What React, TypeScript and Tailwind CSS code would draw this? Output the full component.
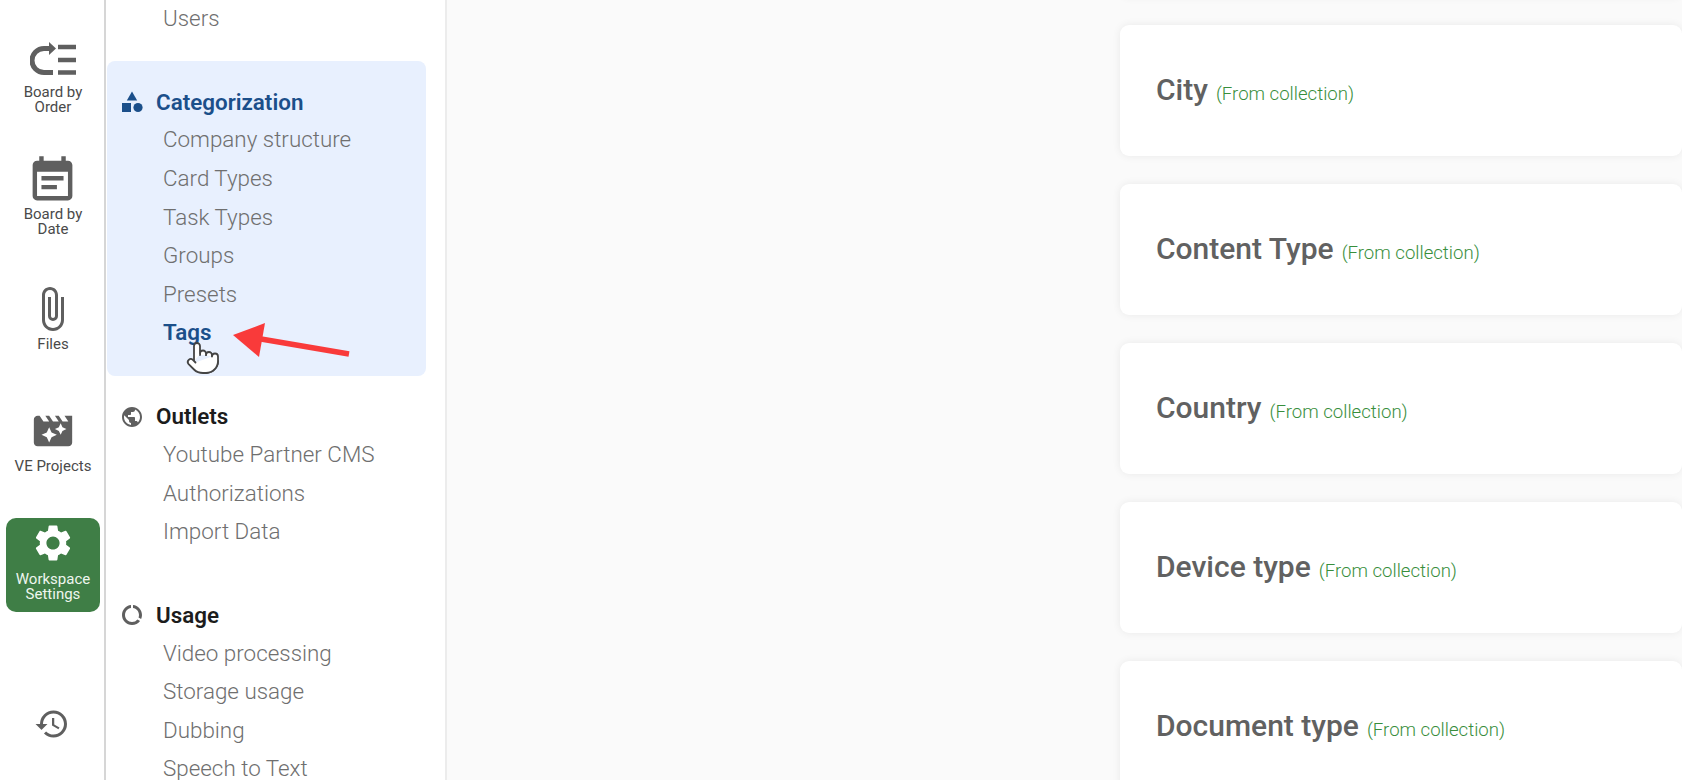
import type { ReactNode } from 'react';
import { MdAttachFile, MdDataUsage, MdEventNote, MdMovieFilter, MdPublic, MdRestore, MdSettings } from 'react-icons/md';
import { Pointer } from 'lucide-react';

function OrderIcon() {
  return (
    <svg width="46" height="36" viewBox="0 0 46 36" fill="none" className="text-[#5f5f5f]">
      <path d="M23 31.5H14A12 12 0 0 1 14 7.5H20" stroke="currentColor" strokeWidth="5" />
      <path d="M19 1L26 7.5L19 14Z" fill="currentColor" />
      <path d="M28 6H46M28 19H46M28 31.5H46" stroke="currentColor" strokeWidth="4.5" />
    </svg>
  );
}

function CategoryIcon() {
  return (
    <svg width="22" height="22" viewBox="0 0 22 22" className="shrink-0 text-[#1b4f8a]" fill="currentColor">
      <path d="M11 0.5L16.2 9.5H5.8Z" />
      <rect x="1" y="12" width="9" height="9" />
      <circle cx="17" cy="16.5" r="4.6" />
    </svg>
  );
}

function RailItem({ icon, label, active }: { icon: ReactNode; label: ReactNode; active?: boolean }) {
  return (
    <div
      className={
        active
          ? 'flex h-[94px] w-[94px] shrink-0 flex-col items-center justify-center rounded-[10px] bg-[#3f7e46] pb-[8px] text-[#eef6ee]'
          : 'flex h-[94px] w-[94px] shrink-0 flex-col items-center justify-center text-[#4a4a4a]'
      }
    >
      <div className="flex h-[44px] items-center justify-center">{icon}</div>
      <div className={active ? 'mt-[7px] text-center text-[15px] leading-[14.7px]' : 'mb-[2.5px] mt-[4.5px] text-center text-[15px] leading-[14.7px]'}>
        {label}
      </div>
    </div>
  );
}

function Rail() {
  return (
    <div className="flex h-full w-[106px] shrink-0 flex-col gap-[28px] border-r-2 border-[#d6d6d6] bg-white pl-[6px] pt-[30px]">
      <RailItem icon={<OrderIcon />} label={<>Board by<br />Order</>} />
      <RailItem icon={<MdEventNote size={53} className="-ml-[2px] text-[#5f5f5f]" />} label={<>Board by<br />Date</>} />
      <RailItem icon={<MdAttachFile size={48} className="-ml-[2px] -mt-[3px] text-[#5f5f5f]" />} label="Files" />
      <RailItem icon={<MdMovieFilter size={46} className="-ml-[1px] -mt-[2px] text-[#5f5f5f]" />} label="VE Projects" />
      <RailItem active icon={<MdSettings size={44} className="text-white" />} label={<>Workspace<br />Settings</>} />
      <div className="mt-[66px] flex w-[92px] justify-center">
        <MdRestore size={36} className="text-[#5f5f5f]" />
      </div>
    </div>
  );
}

function NavSection({ icon, title, items, active }: { icon: ReactNode; title: string; items: string[]; active?: boolean }) {
  return (
    <div className={active ? 'rounded-[8px] bg-[#e8f0fe] pb-[24px] pl-[14px] pt-[22px]' : 'pb-[23.5px] pl-[14px] pt-[22px]'}>
      <div className="flex h-[37.2px] items-center">
        <div className="flex w-[35px] shrink-0 items-center">{icon}</div>
        <span className={active ? 'mt-[2px] text-[22.4px] font-semibold text-[#1b4f8a]' : 'mt-[1px] text-[22.4px] font-semibold text-[#1c1c1c]'}>{title}</span>
      </div>
      {items.map(item => (
        <div
          key={item}
          className={
            item === 'Tags'
              ? 'pl-[42px] pt-[1px] text-[22.4px] font-semibold leading-[37.6px] text-[#1b4f8a]'
              : 'pl-[42px] text-[22.4px] font-light leading-[38.6px] text-[#6f6f6f]'
          }
        >
          {item}
        </div>
      ))}
    </div>
  );
}

function Sidebar() {
  return (
    <div className="h-full w-[341px] shrink-0 overflow-hidden border-r-2 border-[#ececec] bg-white pl-[1px] pr-[19px]">
      <div className="-mt-[1px] pb-[23.7px] pl-[56px] text-[22.4px] font-light leading-[38.6px] text-[#6f6f6f]">Users</div>
      <NavSection
        active
        icon={<CategoryIcon />}
        title="Categorization"
        items={['Company structure', 'Card Types', 'Task Types', 'Groups', 'Presets', 'Tags']}
      />
      <NavSection
        icon={<MdPublic size={24} className="-ml-[1px] text-[#5f5f5f]" />}
        title="Outlets"
        items={['Youtube Partner CMS', 'Authorizations', 'Import Data']}
      />
      <NavSection
        icon={<MdDataUsage size={24} className="-ml-[1px] text-[#5f5f5f]" />}
        title="Usage"
        items={['Video processing', 'Storage usage', 'Dubbing', 'Speech to Text']}
      />
    </div>
  );
}

function FieldCard({ name }: { name?: string }) {
  return (
    <div className="flex h-[131px] shrink-0 items-center gap-[8px] rounded-[9px] bg-white pl-[36px] shadow-[0_0_8px_rgba(0,0,0,0.07)]">
      {name && (
        <>
          <span className="-mt-[2px] text-[30px] font-medium text-[#616161]">{name}</span>
          <span className="mt-[8px] text-[18.6px] font-light text-[#388e3c]">(From collection)</span>
        </>
      )}
    </div>
  );
}

export default function App() {
  const fields = ['City', 'Content Type', 'Country', 'Device type', 'Document type'];
  return (
    <div className="relative flex h-[780px] w-[1682px] overflow-hidden bg-[#fafafa] font-['Roboto',sans-serif]">
      <Rail />
      <Sidebar />
      <div className="flex min-w-0 flex-1 flex-col gap-[28px] overflow-hidden pl-[673px] pt-0">
        <div className="-mt-[134px]">
          <FieldCard />
        </div>
        {fields.map(f => (
          <FieldCard key={f} name={f} />
        ))}
      </div>

      {/* annotation arrow over the Tags entry */}
      <svg className="absolute left-[225px] top-[315px]" width="130" height="48" viewBox="0 0 130 48">
        <path d="M8 20L40 8L34 42Z" fill="#f93a3a" />
        <path d="M36 24L124 39" stroke="#f93a3a" strokeWidth="5.5" />
      </svg>
      <Pointer className="absolute left-[185px] top-[335px] h-[46px] w-[36px]" fill="#fff" stroke="#444" strokeWidth={1.2} />
    </div>
  );
}
